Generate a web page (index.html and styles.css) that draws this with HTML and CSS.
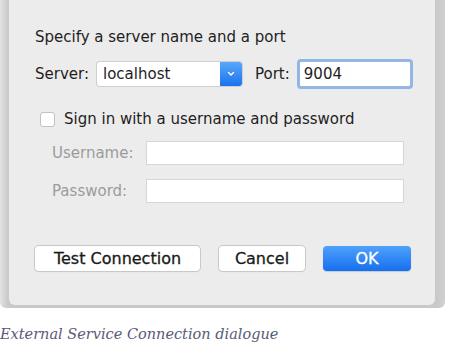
FILE: index.html
```html
<!DOCTYPE html>
<html>
<head>
<meta charset="utf-8">
<link rel="stylesheet" href="styles.css">
</head>
<body>
<div class="page">
  <div class="frame">
    <div class="dialog">
      <div class="title">Specify a server name and a port</div>
      <div class="server-row">
        <span class="label">Server:</span>
        <div class="combo">
          <span class="combo-text">localhost</span>
          <span class="combo-btn">
            <svg width="8" height="6" viewBox="0 0 8 6"><path d="M1.5 1.5 L4 4 L6.5 1.5" fill="none" stroke="#fff" stroke-width="1.4" stroke-linecap="round" stroke-linejoin="round"/></svg>
          </span>
        </div>
        <span class="label port-label">Port:</span>
        <div class="port-field">9004</div>
      </div>
      <div class="check-row">
        <span class="checkbox"></span>
        <span class="check-text">Sign in with a username and password</span>
      </div>
      <div class="cred-row">
        <span class="cred-label">Username:</span>
        <div class="field"></div>
      </div>
      <div class="cred-row">
        <span class="cred-label">Password:</span>
        <div class="field"></div>
      </div>
      <div class="buttons">
        <div class="btn btn-test">Test Connection</div>
        <div class="btn btn-cancel">Cancel</div>
        <div class="btn btn-ok">OK</div>
      </div>
    </div>
  </div>
  <div class="caption">External Service Connection dialogue</div>
</div>
</body>
</html>
```
FILE: styles.css
```css
html, body {
  margin: 0;
  padding: 0;
  background: #ffffff;
}
.page {
  width: 451px;
  height: 352px;
  overflow: hidden;
}
.frame {
  width: 426px;
  padding: 0 10px 3px 9px;
  background: linear-gradient(to right, #e2e2e2 0px, #c9c9c9 8px, #c9c9c9 437px, #d0d0d0 445px);
  border-radius: 0 0 6px 6px;
}
.dialog {
  background: #edecec;
  height: 305px;
  border-radius: 0 0 6px 6px;
  box-sizing: border-box;
  padding: 27px 0 0 26px;
  font-family: "DejaVu Sans", "Liberation Sans", sans-serif;
  font-size: 15px;
  color: #1e1e1e;
}
.title {
  height: 20px;
  line-height: 20px;
}
.server-row {
  display: flex;
  align-items: center;
  margin-top: 13px;
  height: 28px;
}
.label {
  width: 62px;
}
.combo {
  display: flex;
  width: 145px;
  height: 24px;
  background: #fff;
  border-radius: 3px;
  box-shadow: 0 0 0 1px #cfcfcf;
}
.combo-text {
  flex: 1;
  line-height: 24px;
  padding-left: 6px;
}
.combo-btn {
  width: 22px;
  display: flex;
  align-items: center;
  justify-content: center;
  background: linear-gradient(#5aa8fb, #1b72ee);
  border-radius: 0 3px 3px 0;
}
.port-label {
  width: auto;
  margin-left: 13px;
  margin-right: 9px;
}
.port-field {
  width: 106px;
  height: 24px;
  line-height: 24px;
  background: #fff;
  padding-left: 4px;
  border: 1px solid #9ab6da;
  box-shadow: 0 0 0 2px #8fb5ea;
  border-radius: 2px;
}
.check-row {
  display: flex;
  align-items: center;
  margin-top: 22px;
  margin-left: 5px;
  height: 18px;
}
.checkbox {
  width: 15px;
  height: 15px;
  background: #fff;
  border: 1px solid #c2c2c2;
  border-radius: 3px;
  box-sizing: border-box;
  margin-right: 9px;
}
.cred-row {
  display: flex;
  align-items: center;
  margin-left: 17px;
  margin-top: 10px;
  height: 25px;
}
.cred-row + .cred-row {
  margin-top: 13px;
}
.check-row + .cred-row {
  margin-top: 12px;
}
.cred-label {
  width: 94px;
  color: #9b9b9b;
}
.field {
  width: 258px;
  height: 24px;
  background: #fff;
  border: 1px solid #d6d6d6;
  box-sizing: border-box;
}
.buttons {
  display: flex;
  align-items: center;
  margin-top: 43px;
}
.btn {
  height: 25px;
  line-height: 25px;
  text-align: center;
  background: #fff;
  border-radius: 4px;
  box-shadow: 0 0 0 1px #c8c8c8, 0 1px 1px rgba(0,0,0,0.15);
  color: #1a1a1a;
  font-size: 16px;
  -webkit-text-stroke: 0.3px currentColor;
}
.btn-test {
  width: 165px;
}
.btn-cancel {
  width: 86px;
  margin-left: 19px;
}
.btn-ok {
  width: 88px;
  margin-left: 18px;
  color: #fff;
  background: linear-gradient(#4fa2fa, #166ff0);
  box-shadow: 0 1px 1px rgba(0,0,0,0.15);
}
.caption {
  margin-top: 18px;
  font-family: "DejaVu Serif", serif;
  font-style: italic;
  font-size: 14.5px;
  color: #5b5a78;
}
```
